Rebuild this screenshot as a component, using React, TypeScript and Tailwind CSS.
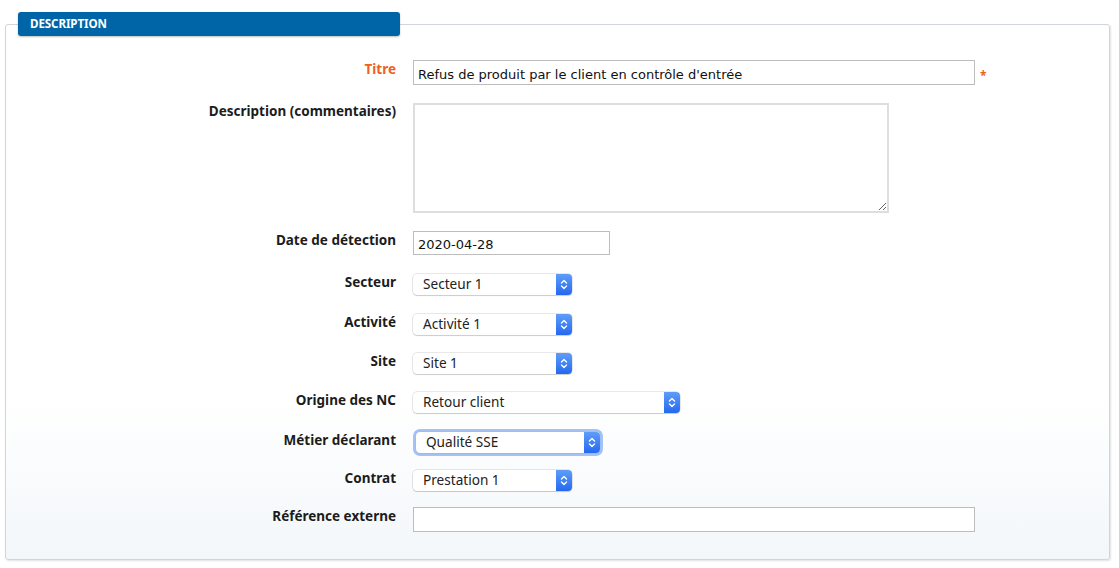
import React from "react";

const font = { fontFamily: '"Noto Sans", "DejaVu Sans", sans-serif' };
const inputFont = { fontFamily: '"DejaVu Sans", "Noto Sans", sans-serif' };

function Chevrons() {
  return (
    <svg width="8" height="11" viewBox="0 0 8 11" fill="none">
      <path d="M1.5 4L4 1.5L6.5 4" stroke="white" strokeWidth="1.4" strokeLinecap="round" strokeLinejoin="round" />
      <path d="M1.5 7L4 9.5L6.5 7" stroke="white" strokeWidth="1.4" strokeLinecap="round" strokeLinejoin="round" />
    </svg>
  );
}

function Select({ value, width, focus }: { value: string; width: string; focus?: boolean }) {
  return (
    <div
      className={
        "flex h-[21px] items-stretch rounded-[4px] bg-white shadow-[0_0_0_0.5px_rgba(0,0,0,0.18),0_1px_1px_rgba(0,0,0,0.12)] " +
        width +
        (focus ? " outline outline-[3px] outline-[#8fb3f5]/80" : "")
      }
    >
      <div className="flex flex-1 items-center pl-[10px] text-[13.6px] text-[#222]">{value}</div>
      <div className="flex w-[16px] items-center justify-center rounded-r-[4px] bg-gradient-to-b from-[#5f9cf9] to-[#2468f0]">
        <Chevrons />
      </div>
    </div>
  );
}

function Row({
  label,
  children,
  mt,
  lpt,
  orange,
}: {
  label: string;
  children: React.ReactNode;
  mt: string;
  lpt: string;
  orange?: boolean;
}) {
  return (
    <div className={"flex items-start " + mt}>
      <div
        className={
          "w-[390px] shrink-0 text-right text-[13.5px] font-bold leading-[16px] " +
          lpt +
          (orange ? " text-[#f0601e]" : " text-[#1c1c1c]")
        }
      >
        {label}
      </div>
      <div className="ml-[17px] flex items-start">{children}</div>
    </div>
  );
}

export default function App() {
  return (
    <div className="min-h-[568px] w-[1119px] bg-white pl-[5px] pt-[24px]" style={font}>
      <div className="flex h-[536px] w-[1105px] flex-col rounded-[3px] border border-[#cfd5da] bg-gradient-to-b from-white from-70% to-[#f3f7fa] shadow-[1px_1px_2px_rgba(0,0,0,0.12)]">
        <div className="-mt-[13px] ml-[12px] flex h-[24px] w-[382px] items-center rounded-[3px] bg-[#0065a6] pl-[12px] text-[11.6px] font-bold tracking-[-0.1px] text-white shadow-[0_1px_2px_rgba(0,0,0,0.25)]">
          DESCRIPTION
        </div>

        <Row label="Titre" mt="mt-[24px]" lpt="pt-[1px]" orange>
          <div
            className="flex h-[25px] w-[562px] items-center border border-[#bdbdbd] bg-white pl-[4px] pt-[4px] text-[13px] text-[#111]"
            style={inputFont}
          >
            Refus de produit par le client en contrôle d'entrée
          </div>
          <span className="ml-[5px] mt-[10px] text-[12px] font-bold leading-[12px] text-[#f0601e]">*</span>
        </Row>

        <Row label="Description (commentaires)" mt="mt-[18px]" lpt="pt-[0px]">
          <textarea className="h-[110px] w-[476px] border-2 border-[#dedede] bg-white outline-none" />
        </Row>

        <Row label="Date de détection" mt="mt-[18px]" lpt="pt-[1px]">
          <div
            className="flex h-[24px] w-[197px] items-center border border-[#bdbdbd] bg-white pl-[4px] pt-[3px] text-[13px] text-[#111]"
            style={inputFont}
          >
            2020-04-28
          </div>
        </Row>

        <Row label="Secteur" mt="mt-[19px]" lpt="pt-[0px]">
          <Select value="Secteur 1" width="w-[159px]" />
        </Row>

        <Row label="Activité" mt="mt-[19px]" lpt="pt-[0px]">
          <Select value="Activité 1" width="w-[159px]" />
        </Row>

        <Row label="Site" mt="mt-[18px]" lpt="pt-[0px]">
          <Select value="Site 1" width="w-[159px]" />
        </Row>

        <Row label="Origine des NC" mt="mt-[18px]" lpt="pt-[0px]">
          <Select value="Retour client" width="w-[267px]" />
        </Row>

        <Row label="Métier déclarant" mt="mt-[19px]" lpt="pt-[0px]">
          <div className="ml-[3px]">
            <Select value="Qualité SSE" width="w-[184px]" focus />
          </div>
        </Row>

        <Row label="Contrat" mt="mt-[17px]" lpt="pt-[0px]">
          <Select value="Prestation 1" width="w-[159px]" />
        </Row>

        <Row label="Référence externe" mt="mt-[16px]" lpt="pt-[1px]">
          <div className="h-[25px] w-[562px] border border-[#bdbdbd] bg-white" />
        </Row>
      </div>
    </div>
  );
}
